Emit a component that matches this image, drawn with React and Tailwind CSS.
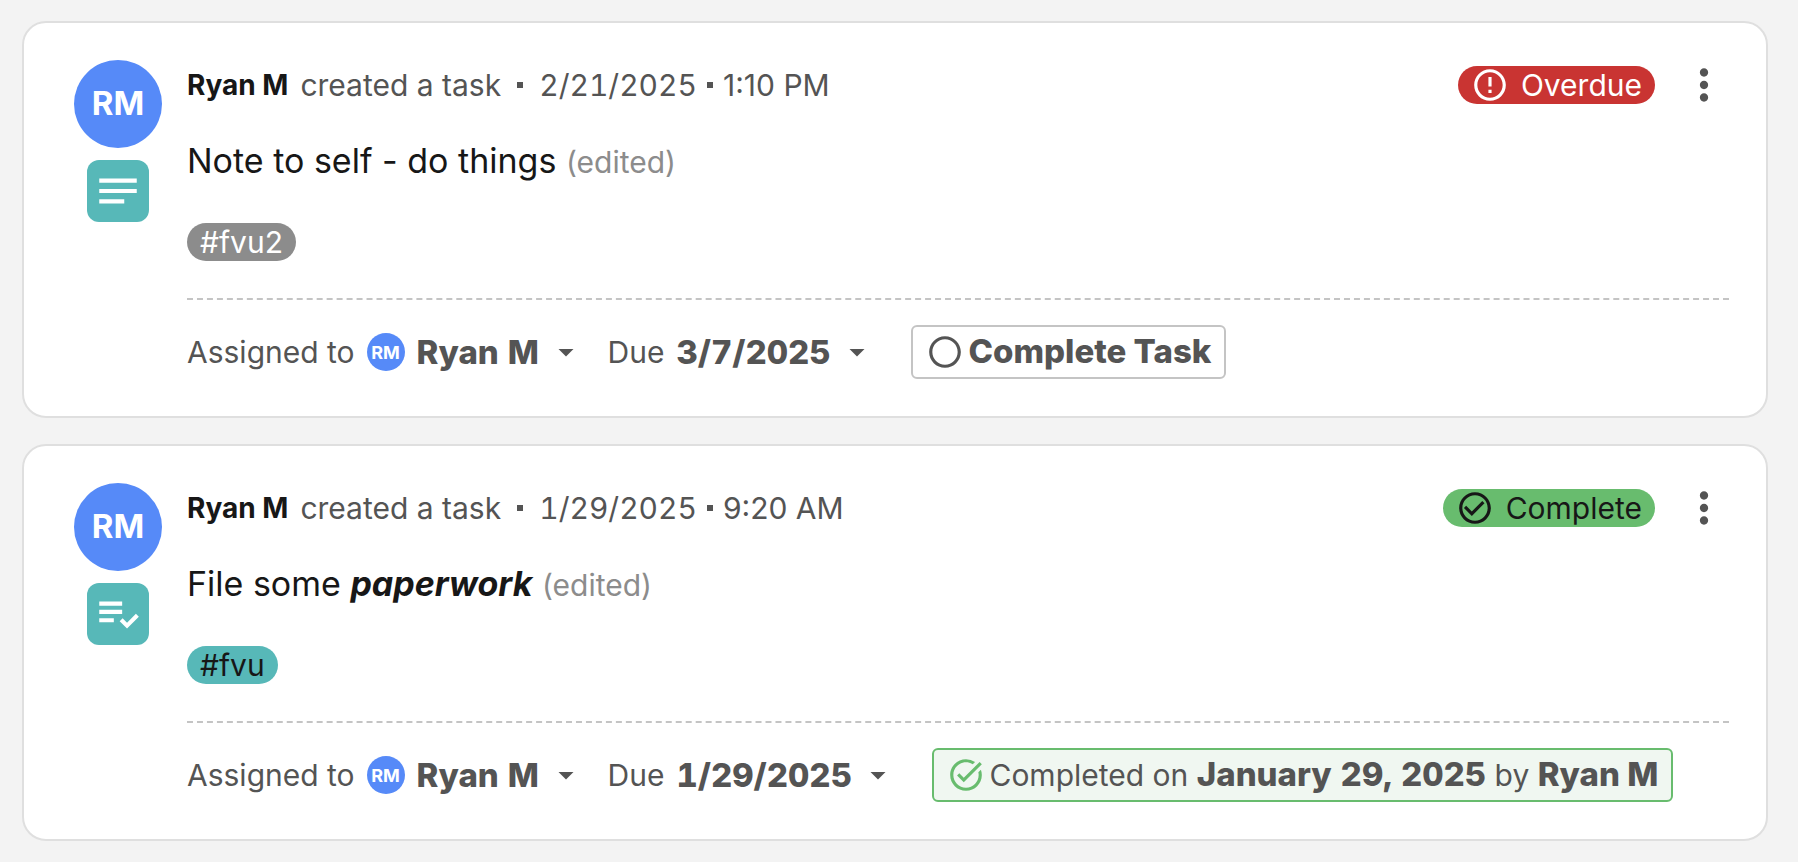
import {
  MdArrowDropDown,
  MdCheckCircleOutline,
  MdErrorOutline,
  MdMoreVert,
  MdNotes,
  MdPlaylistAddCheck,
  MdRadioButtonUnchecked,
  MdTaskAlt,
} from 'react-icons/md';

const tasks = [
  {
    id: 'task-1',
    author: 'Ryan M',
    initials: 'RM',
    date: '2/21/2025',
    time: '1:10 PM',
    body: 'Note to self - do things',
    tag: '#fvu2',
    due: '3/7/2025',
    completed: null,
  },
  {
    id: 'task-2',
    author: 'Ryan M',
    initials: 'RM',
    date: '1/29/2025',
    time: '9:20 AM',
    body: (
      <>
        File some <strong className="font-bold italic">paperwork</strong>
      </>
    ),
    tag: '#fvu',
    due: '1/29/2025',
    completed: { on: 'January 29, 2025', by: 'Ryan M' },
  },
];

function StatusBadge({ complete }) {
  const Icon = complete ? MdCheckCircleOutline : MdErrorOutline;
  return (
    <span
      className={`flex h-[38px] items-center gap-3 rounded-full px-[13px] text-[30px] ${
        complete ? 'bg-[#68bc6e] text-[#171717]' : 'bg-[#c93432] text-white'
      }`}
    >
      <Icon className="size-[38px]" />
      {complete ? 'Complete' : 'Overdue'}
    </span>
  );
}

// Native select with its own caret drawn over the right padding
function InlineSelect({ id, value }) {
  return (
    <span className="relative flex items-center">
      <select
        id={id}
        defaultValue={value}
        className="cursor-pointer appearance-none bg-transparent pr-11 text-[33px] leading-10 font-extrabold tabular-nums"
      >
        <option>{value}</option>
      </select>
      <MdArrowDropDown className="pointer-events-none absolute right-0 size-9" />
    </span>
  );
}

function TaskCard({ task }) {
  const { id, author, initials, date, time, body, tag, due, completed } = task;
  const TypeIcon = completed ? MdPlaylistAddCheck : MdNotes;

  return (
    <article className="flex gap-[25px] rounded-3xl border-2 border-[#dfdfdf] bg-white py-[37px] pr-[37px] pl-[50px]">
      {/* Avatar and task type */}
      <div className="flex shrink-0 flex-col items-center gap-3">
        <div className="flex size-[88px] items-center justify-center rounded-full bg-[#568af8] text-[33px] font-bold text-white">
          {initials}
        </div>
        <div className="flex size-[62px] items-center justify-center rounded-xl bg-[#57b8b8] text-white">
          <TypeIcon className="size-[50px]" />
        </div>
      </div>

      <div className="min-w-0 flex-1">
        <header className="flex h-[50px] items-center text-[30px]">
          <span className="text-[28px] font-bold text-[#171717]">{author}</span>
          <span className="ml-3">created a task</span>
          <span className="mx-4 size-[6px] bg-[#545454]" />
          <time className="tabular-nums">{date}</time>
          <span className="mx-2.5 size-[6px] bg-[#545454]" />
          <time>{time}</time>
          <div className="ml-auto flex items-center gap-6">
            <StatusBadge complete={Boolean(completed)} />
            <button type="button" aria-label="More options" className="cursor-pointer">
              <MdMoreVert className="size-[50px]" />
            </button>
          </div>
        </header>

        <p className="mt-6 text-[34px] leading-[54px] text-[#171717]">
          {body} <span className="text-[30px] text-[#8c8c8c]">(edited)</span>
        </p>

        <a
          href="#tag"
          className={`mt-[34px] flex h-[38px] w-fit items-center rounded-full px-[13px] text-[30px] ${
            completed ? 'bg-[#57b8b8] text-[#171717]' : 'bg-[#8c8c8c] text-white'
          }`}
        >
          {tag}
        </a>

        {/* Assignment, due date and completion */}
        <footer className="mt-[37px] flex items-center border-t-2 border-dashed border-[#c4c4c4] pt-[25px] text-[30px]">
          <label htmlFor={`${id}-assignee`}>Assigned to</label>
          <span className="mx-3 flex size-[38px] items-center justify-center rounded-full bg-[#568af8] text-[18px] font-bold text-white">
            {initials}
          </span>
          <InlineSelect id={`${id}-assignee`} value={author} />
          <label htmlFor={`${id}-due`} className="mr-3 ml-6">
            Due
          </label>
          <InlineSelect id={`${id}-due`} value={due} />
          {completed ? (
            <p className="ml-9 flex h-[54px] items-center gap-1 rounded-md border-2 border-[#68bc6e] bg-[#f0f7f1] px-[13px]">
              <MdTaskAlt className="size-[38px] text-[#68bc6e]" />
              <span>
                Completed on{' '}
                <strong className="text-[33px] font-extrabold tabular-nums">{completed.on}</strong> by{' '}
                <strong className="text-[33px] font-extrabold">{completed.by}</strong>
              </span>
            </p>
          ) : (
            <button
              type="button"
              className="ml-9 flex h-[54px] cursor-pointer items-center gap-1 rounded-md border-2 border-[#c4c4c4] px-[13px] text-[33px] font-extrabold"
            >
              <MdRadioButtonUnchecked className="size-[38px]" />
              Complete Task
            </button>
          )}
        </footer>
      </div>
    </article>
  );
}

export default function App() {
  return (
    <main className="flex min-h-screen flex-col gap-[26px] bg-[#f3f3f3] pt-[21px] pr-[30px] pb-[21px] pl-[22px] font-['Inter',sans-serif] whitespace-nowrap text-[#545454]">
      {tasks.map((task) => (
        <TaskCard key={task.id} task={task} />
      ))}
    </main>
  );
}
